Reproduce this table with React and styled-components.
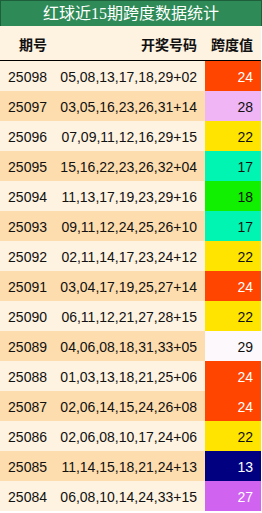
import React from 'react'
import styled, { createGlobalStyle } from 'styled-components'

const Global = createGlobalStyle`
  html, body {
    margin: 0;
    padding: 0;
    background: #fff;
  }
  body {
    font-family: "Liberation Sans", "Noto Sans CJK SC", sans-serif;
  }
`

const Wrapper = styled.div`
  width: 262px;
`

const Title = styled.div`
  height: 25px;
  border: 1px solid #1f5e3b;
  border-bottom: none;
  background: #2e8b57;
  color: #fff;
  font-family: "Liberation Serif", "Noto Sans CJK SC", serif;
  font-size: 16px;
  line-height: 26px;
  text-align: center;
`

const Table = styled.div`
  width: 261px;
  display: grid;
  grid-template-columns: 55px 150px 56px;
`

const HeadCell = styled.div`
  height: 35px;
  background: #fef2e0;
  border-bottom: 1px solid #000;
  font-family: "Noto Sans CJK SC", sans-serif;
  font-weight: bold;
  font-size: 14px;
  color: #111;
  display: flex;
  align-items: center;
  justify-content: flex-end;
  padding-right: 8px;
  padding-top: 1px;
  box-sizing: border-box;
`

const Cell = styled.div`
  height: 30px;
  background: ${p => p.$bg};
  color: ${p => p.$fg || '#111'};
  font-size: 14px;
  display: flex;
  align-items: center;
  justify-content: flex-end;
  padding-right: 8px;
  padding-top: 1px;
  box-sizing: border-box;
`

const spanColors = {
  13: ['#000080', '#fff'],
  17: ['#00f5b2', '#111'],
  18: ['#10f000', '#111'],
  22: ['#ffe400', '#111'],
  24: ['#ff4500', '#fff'],
  27: ['#d063ef', '#fff'],
  28: ['#efb5f5', '#111'],
  29: ['#fcf8fc', '#111'],
}

const rows = [
  ['25098', '05,08,13,17,18,29+02', 24],
  ['25097', '03,05,16,23,26,31+14', 28],
  ['25096', '07,09,11,12,16,29+15', 22],
  ['25095', '15,16,22,23,26,32+04', 17],
  ['25094', '11,13,17,19,23,29+16', 18],
  ['25093', '09,11,12,24,25,26+10', 17],
  ['25092', '02,11,14,17,23,24+12', 22],
  ['25091', '03,04,17,19,25,27+14', 24],
  ['25090', '06,11,12,21,27,28+15', 22],
  ['25089', '04,06,08,18,31,33+05', 29],
  ['25088', '01,03,13,18,21,25+06', 24],
  ['25087', '02,06,14,15,24,26+08', 24],
  ['25086', '02,06,08,10,17,24+06', 22],
  ['25085', '11,14,15,18,21,24+13', 13],
  ['25084', '06,08,10,14,24,33+15', 27],
]

export default function App() {
  return (
    <>
      <Global />
      <Wrapper>
        <Title>红球近15期跨度数据统计</Title>
        <Table>
          <HeadCell>期号</HeadCell>
          <HeadCell>开奖号码</HeadCell>
          <HeadCell>跨度值</HeadCell>
          {rows.map(([issue, nums, span], i) => {
            const bg = i % 2 === 0 ? '#fef2e0' : '#fddcae'
            const [sbg, sfg] = spanColors[span]
            return (
              <React.Fragment key={issue}>
                <Cell $bg={bg}>{issue}</Cell>
                <Cell $bg={bg}>{nums}</Cell>
                <Cell $bg={sbg} $fg={sfg}>{span}</Cell>
              </React.Fragment>
            )
          })}
        </Table>
      </Wrapper>
    </>
  )
}
